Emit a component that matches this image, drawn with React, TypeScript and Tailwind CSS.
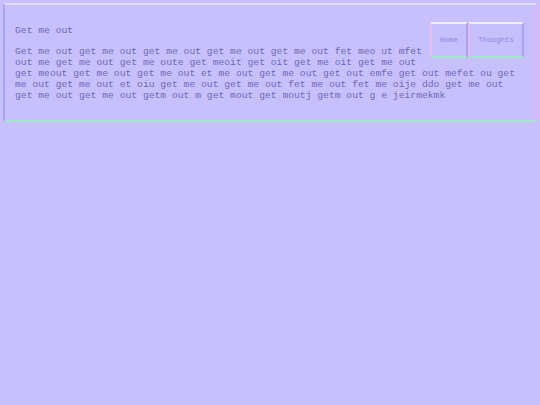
// App.tsx — lavender "Get me out" page with floating nav

const NAV = ['Home', 'Thoughts']

const BODY =
  'Get me out get me out get me out get me out get me out fet meo ut mfet out me get me out get me oute get meoit get oit get me oit get me out get meout get me out get me out et me out get me out get out emfe get out mefet ou get me out get me out et oiu get me out get me out fet me out fet me oije ddo get me out get me out get me out getm out m get mout get moutj getm out g e jeirmekmk'

export default function App() {
  return (
    <div
      className="min-h-[405px] bg-[#c8c0fc] p-[3px] text-[#6f68b8]"
      style={{ fontFamily: '"Liberation Mono", "Courier New", monospace' }}
    >
      <div className="border-t-2 border-l-2 border-b-2 border-r-2 border-t-[#e2def0] border-l-[#aca4f0] border-b-[#a6e2d4] border-r-[#e2b8f4] pt-[17px] pr-[11px] pb-[19px] pl-[10px]">
        {/* Nav */}
        <nav className="float-right ml-[4px] mb-[7px] flex">
          {NAV.map((item) => (
            <a
              key={item}
              href="#"
              className="block h-[36px] border-t-2 border-l-2 border-b-2 border-r-2 border-t-[#f2f0e2] border-l-[#e6bef2] border-b-[#a6e2d0] border-r-[#a8a0f0] px-[8px] text-[7.5px] leading-[32px] text-[#8c88e0]"
            >
              {item}
            </a>
          ))}
        </nav>

        <h1 className="mt-[3px] text-[9.7px] leading-[11px] font-normal">Get me out</h1>
        <p className="mt-[10px] text-[9.7px] leading-[11px]">{BODY}</p>
      </div>
    </div>
  )
}
